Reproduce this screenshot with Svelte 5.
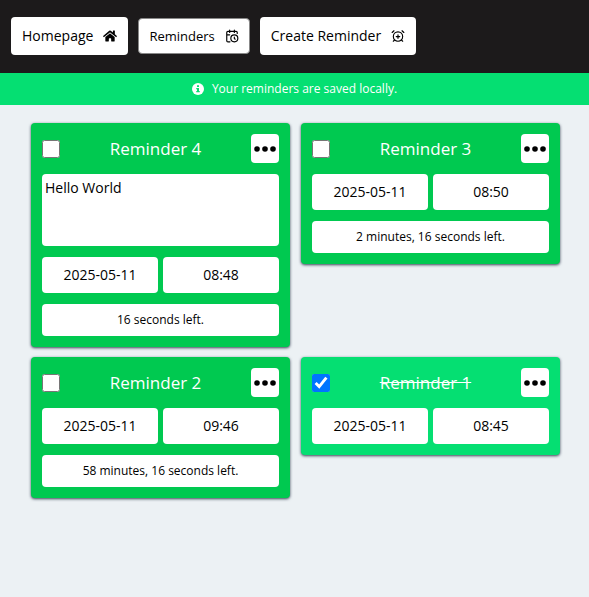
<script>
  let reminders = $state([
    { id: 4, title: 'Reminder 4', note: 'Hello World', date: '2025-05-11', time: '08:48', left: '16 seconds left.', done: false },
    { id: 3, title: 'Reminder 3', note: '', date: '2025-05-11', time: '08:50', left: '2 minutes, 16 seconds left.', done: false },
    { id: 2, title: 'Reminder 2', note: '', date: '2025-05-11', time: '09:46', left: '58 minutes, 16 seconds left.', done: false },
    { id: 1, title: 'Reminder 1', note: '', date: '2025-05-11', time: '08:45', left: '', done: true }
  ]);
</script>

<header>
  <nav>
    <a href="#home">
      Homepage
      <svg viewBox="0 0 576 512" fill="currentColor" aria-hidden="true">
        <path d="M280.37 148.26L96 300.11V464a16 16 0 0 0 16 16l112.06-.29a16 16 0 0 0 15.92-16V368a16 16 0 0 1 16-16h64a16 16 0 0 1 16 16v95.64a16 16 0 0 0 16 16.05L464 480a16 16 0 0 0 16-16V300L295.67 148.26a12.19 12.19 0 0 0-15.3 0zM571.6 251.47L488 182.56V44.05a12 12 0 0 0-12-12h-56a12 12 0 0 0-12 12v72.61L318.47 43a48 48 0 0 0-61 0L4.34 251.47a12 12 0 0 0-1.6 16.9l25.5 31A12 12 0 0 0 45.15 301l235.22-193.74a12.19 12.19 0 0 1 15.3 0L530.9 301a12 12 0 0 0 16.9-1.6l25.5-31a12 12 0 0 0-1.7-16.93z" />
      </svg>
    </a>
    <a href="#reminders" class="current" aria-current="page">
      Reminders
      <svg class="line" viewBox="0 0 24 24" aria-hidden="true">
        <path d="M21 7.5V6a2 2 0 0 0-2-2H5a2 2 0 0 0-2 2v14a2 2 0 0 0 2 2h3.5M16 2v4M8 2v4M3 10h5M17.5 17.5 16 16.3V14" />
        <circle cx="16" cy="16" r="6" />
      </svg>
    </a>
    <a href="#create">
      Create Reminder
      <svg class="line" viewBox="0 0 24 24" aria-hidden="true">
        <circle cx="12" cy="13" r="8" />
        <path d="M5 3 2 6M22 6l-3-3M6.38 18.7 4 21M17.64 18.67 20 21M12 10v6M9 13h6" />
      </svg>
    </a>
  </nav>
</header>

<p class="notice">
  <svg viewBox="0 0 24 24" aria-hidden="true">
    <circle cx="12" cy="12" r="12" fill="#fff" />
    <path d="M10 4.5h4v3.5h-4zM8.500 10h5.500v6h1.500v2.500h-7V16H10v-3.500H8.500z" fill="#05df72" />
  </svg>
  Your reminders are saved locally.
</p>

<main>
  {#each reminders as reminder (reminder.id)}
    <article class:done={reminder.done}>
      <div class="top">
        <input type="checkbox" id="done-{reminder.id}" bind:checked={reminder.done} />
        <label for="done-{reminder.id}">{reminder.title}</label>
        <button type="button" aria-label="Options for {reminder.title}">
          <svg viewBox="0 0 22 6" aria-hidden="true">
            <circle cx="3" cy="3" r="2.8" />
            <circle cx="11" cy="3" r="2.8" />
            <circle cx="19" cy="3" r="2.8" />
          </svg>
        </button>
      </div>
      {#if reminder.note}
        <textarea readonly aria-label="Note for {reminder.title}" value={reminder.note}></textarea>
      {/if}
      <div class="when">
        <time>{reminder.date}</time>
        <time>{reminder.time}</time>
      </div>
      {#if reminder.left}
        <p class="left">{reminder.left}</p>
      {/if}
    </article>
  {/each}
</main>

<style>
  :global(body) {
    margin: 0;
    background: #ecf1f4;
    color: #000;
    font-family: 'Open Sans', 'Noto Sans', sans-serif;
    font-size: 14px;
    line-height: 20px;
  }

  header {
    padding: 17px 11px 18px;
    background: #1c1a1b;
  }

  nav {
    display: flex;
    align-items: center;
    gap: 10px;
  }

  nav a {
    display: flex;
    align-items: center;
    gap: 10px;
    box-sizing: border-box;
    height: 38px;
    padding: 0 11px;
    border-radius: 4px;
    background: #fff;
    color: #000;
    text-decoration: none;
    white-space: nowrap;
  }

  nav a.current {
    height: 36px;
    padding: 0 10px;
    border: 1px solid #888;
    font-size: 13px;
  }

  nav svg {
    width: 14px;
    height: 14px;
  }

  .line {
    fill: none;
    stroke: currentColor;
    stroke-width: 2;
    stroke-linecap: round;
    stroke-linejoin: round;
  }

  .notice {
    display: flex;
    align-items: center;
    justify-content: center;
    gap: 8px;
    margin: 0;
    padding: 6px 12px;
    background: #05df72;
    color: #fff;
    font-size: 12px;
  }

  .notice svg {
    width: 12px;
    height: 12px;
  }

  main {
    display: grid;
    grid-template-columns: 1fr 1fr;
    align-items: start;
    gap: 10px 11px;
    padding: 18px 29px 18px 31px;
  }

  article {
    display: flex;
    flex-direction: column;
    gap: 11px;
    padding: 11px;
    border-radius: 4px;
    background: #00c950;
    box-shadow: 0 1px 3px #364153;
  }

  article.done {
    background: #05df72;
  }

  .top {
    display: flex;
    align-items: center;
    justify-content: space-between;
  }

  .top input {
    width: 18px;
    height: 18px;
    margin: 0;
    accent-color: #0075ff;
  }

  label {
    color: #fff;
    font-size: 17px;
  }

  .done label {
    text-decoration: line-through;
  }

  button {
    display: flex;
    align-items: center;
    justify-content: center;
    width: 28px;
    height: 29px;
    padding: 0;
    border: 0;
    border-radius: 4px;
    background: #fff;
  }

  button svg {
    width: 22px;
    height: 6px;
  }

  textarea {
    box-sizing: border-box;
    width: 100%;
    height: 72px;
    padding: 4px 3px;
    border: 0;
    border-radius: 4px;
    background: #fff;
    color: #000;
    font: inherit;
    resize: none;
  }

  .when {
    display: grid;
    grid-template-columns: 1fr 1fr;
    gap: 5px;
  }

  time,
  .left {
    margin: 0;
    border-radius: 4px;
    background: #fff;
    text-align: center;
  }

  time {
    padding: 8px 4px;
  }

  .left {
    padding: 6px 4px;
    font-size: 12px;
  }
</style>
